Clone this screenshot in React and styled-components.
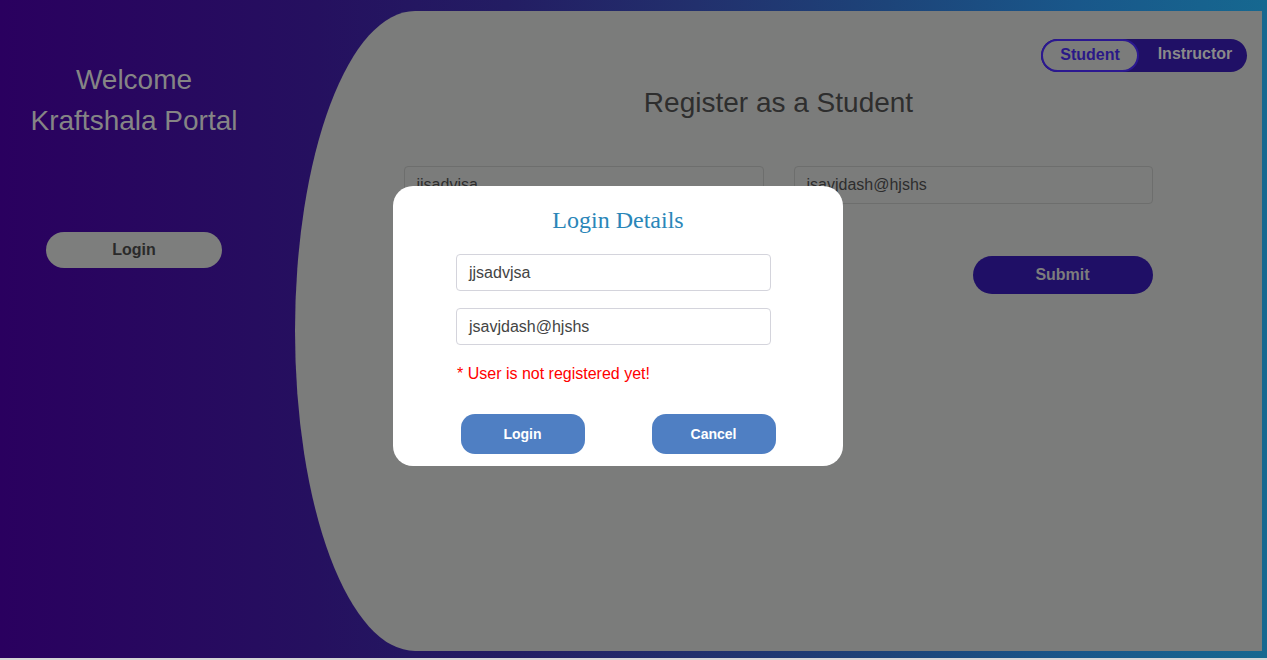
import React from "react";
import styled, { createGlobalStyle } from "styled-components";

const Global = createGlobalStyle`
  html, body { margin: 0; padding: 0; background: #d6d6d6; }
  * { box-sizing: border-box; }
  body { font-family: "Liberation Sans", Arial, sans-serif; }
`;

const Page = styled.div`
  position: relative;
  display: flex;
  height: 658px;
  background: linear-gradient(90deg, #2a005f 0%, #25105f 25%, #231d63 40%, #22306d 55%, #1d4479 70%, #19578a 85%, #166890 100%);
`;

const Side = styled.aside`
  width: 295px;
  padding: 59px 27px 0 0;
  display: flex;
  flex-direction: column;
  align-items: center;
`;

const Welcome = styled.h1`
  margin: 0;
  font-weight: 400;
  font-size: 28px;
  line-height: 41px;
  color: #858585;
  text-align: center;
`;

const PillButton = styled.button`
  border: none;
  width: ${(p) => p.$w}px;
  height: ${(p) => p.$h}px;
  border-radius: ${(p) => p.$h / 2}px;
  background: ${(p) => p.$bg};
  color: ${(p) => p.$fg};
  font-family: "Liberation Sans", Arial, sans-serif;
  font-weight: 700;
  font-size: 16px;
  padding: 0;
`;

const SideLogin = styled(PillButton)`
  margin-top: 91px;
`;

const Panel = styled.main`
  flex: 1;
  margin: 11px 5px 7px 0;
  background: #7b7c7b;
  border-radius: 120px 0 0 120px / 320px 0 0 320px;
  display: flex;
  flex-direction: column;
  align-items: center;
`;

const ToggleRow = styled.div`
  align-self: stretch;
  display: flex;
  justify-content: flex-end;
  padding: 28px 15px 0 0;
`;

const Toggle = styled.div`
  display: flex;
  align-items: center;
  width: 206px;
  height: 33px;
  border-radius: 17px;
  background: #201066;
`;

const ToggleOption = styled.div`
  height: 33px;
  border-radius: 17px;
  display: flex;
  align-items: center;
  justify-content: center;
  font-weight: 700;
  font-size: 16px;
  ${(p) =>
    p.$active
      ? `width: 98px; border: 2px solid #2b1890; background: #7b7c7b; color: #2a1888; padding-bottom: 1px;`
      : `flex: 1; color: #8a8a8a; padding-bottom: 4px; padding-left: 4px;`}
`;

const Title = styled.h2`
  margin: 15px 0 0;
  font-weight: 400;
  font-size: 28px;
  line-height: 32px;
  color: #2e2e2e;
`;

const FormGrid = styled.div`
  margin: 47px 1px 0 0;
  display: grid;
  grid-template-columns: 360px 359px;
  column-gap: 30px;
  row-gap: 52px;
`;

const PanelInput = styled.div`
  height: 38px;
  border: 1px solid #6d6e6d;
  border-radius: 4px;
  padding-left: 12px;
  display: flex;
  align-items: center;
  font-size: 16px;
  color: #2d2d2d;
`;

const SubmitCell = styled.div`
  grid-column: 2;
  display: flex;
  justify-content: flex-end;
`;

const Modal = styled.div`
  position: absolute;
  left: 393px;
  top: 186px;
  width: 450px;
  height: 280px;
  background: #ffffff;
  border-radius: 20px;
  display: flex;
  flex-direction: column;
  align-items: center;
  padding-top: 19px;
`;

const ModalTitle = styled.h3`
  margin: 0;
  font-family: "Liberation Serif", "Times New Roman", serif;
  font-weight: 400;
  font-size: 24px;
  line-height: 30px;
  color: #2a86b8;
`;

const Fields = styled.div`
  align-self: flex-start;
  margin: 19px 0 0 63px;
  width: 315px;
  display: flex;
  flex-direction: column;
  gap: 17px;
`;

const ModalInput = styled.div`
  height: 37px;
  border: 1px solid #d4d4dc;
  border-radius: 4px;
  padding-left: 12px;
  display: flex;
  align-items: center;
  font-size: 16px;
  color: #444;
`;

const ErrorText = styled.p`
  align-self: flex-start;
  margin: 20px 0 0 64px;
  font-size: 16px;
  line-height: 18px;
  color: #ff0000;
`;

const ButtonRow = styled.div`
  margin-top: 31px;
  display: flex;
  gap: 67px;
`;

const ModalButton = styled.button`
  width: 124px;
  height: 40px;
  border: none;
  border-radius: 14px;
  background: #4f7fc3;
  color: #ffffff;
  font-family: "Liberation Sans", Arial, sans-serif;
  font-weight: 700;
  font-size: 14px;
`;

export default function App() {
  return (
    <>
      <Global />
      <Page>
        <Side>
          <Welcome>
            Welcome
            <br />
            Kraftshala Portal
          </Welcome>
          <SideLogin $w={176} $h={36} $bg="#7d7e7d" $fg="#2a2a2a">
            Login
          </SideLogin>
        </Side>
        <Panel>
          <ToggleRow>
            <Toggle>
              <ToggleOption $active>Student</ToggleOption>
              <ToggleOption>Instructor</ToggleOption>
            </Toggle>
          </ToggleRow>
          <Title>Register as a Student</Title>
          <FormGrid>
            <PanelInput>jjsadvjsa</PanelInput>
            <PanelInput>jsavjdash@hjshs</PanelInput>
            <SubmitCell>
              <PillButton $w={180} $h={38} $bg="#1f0f66" $fg="#7d7d7d">
                Submit
              </PillButton>
            </SubmitCell>
          </FormGrid>
        </Panel>
        <Modal>
          <ModalTitle>Login Details</ModalTitle>
          <Fields>
            <ModalInput>jjsadvjsa</ModalInput>
            <ModalInput>jsavjdash@hjshs</ModalInput>
          </Fields>
          <ErrorText>* User is not registered yet!</ErrorText>
          <ButtonRow>
            <ModalButton>Login</ModalButton>
            <ModalButton>Cancel</ModalButton>
          </ButtonRow>
        </Modal>
      </Page>
    </>
  );
}
